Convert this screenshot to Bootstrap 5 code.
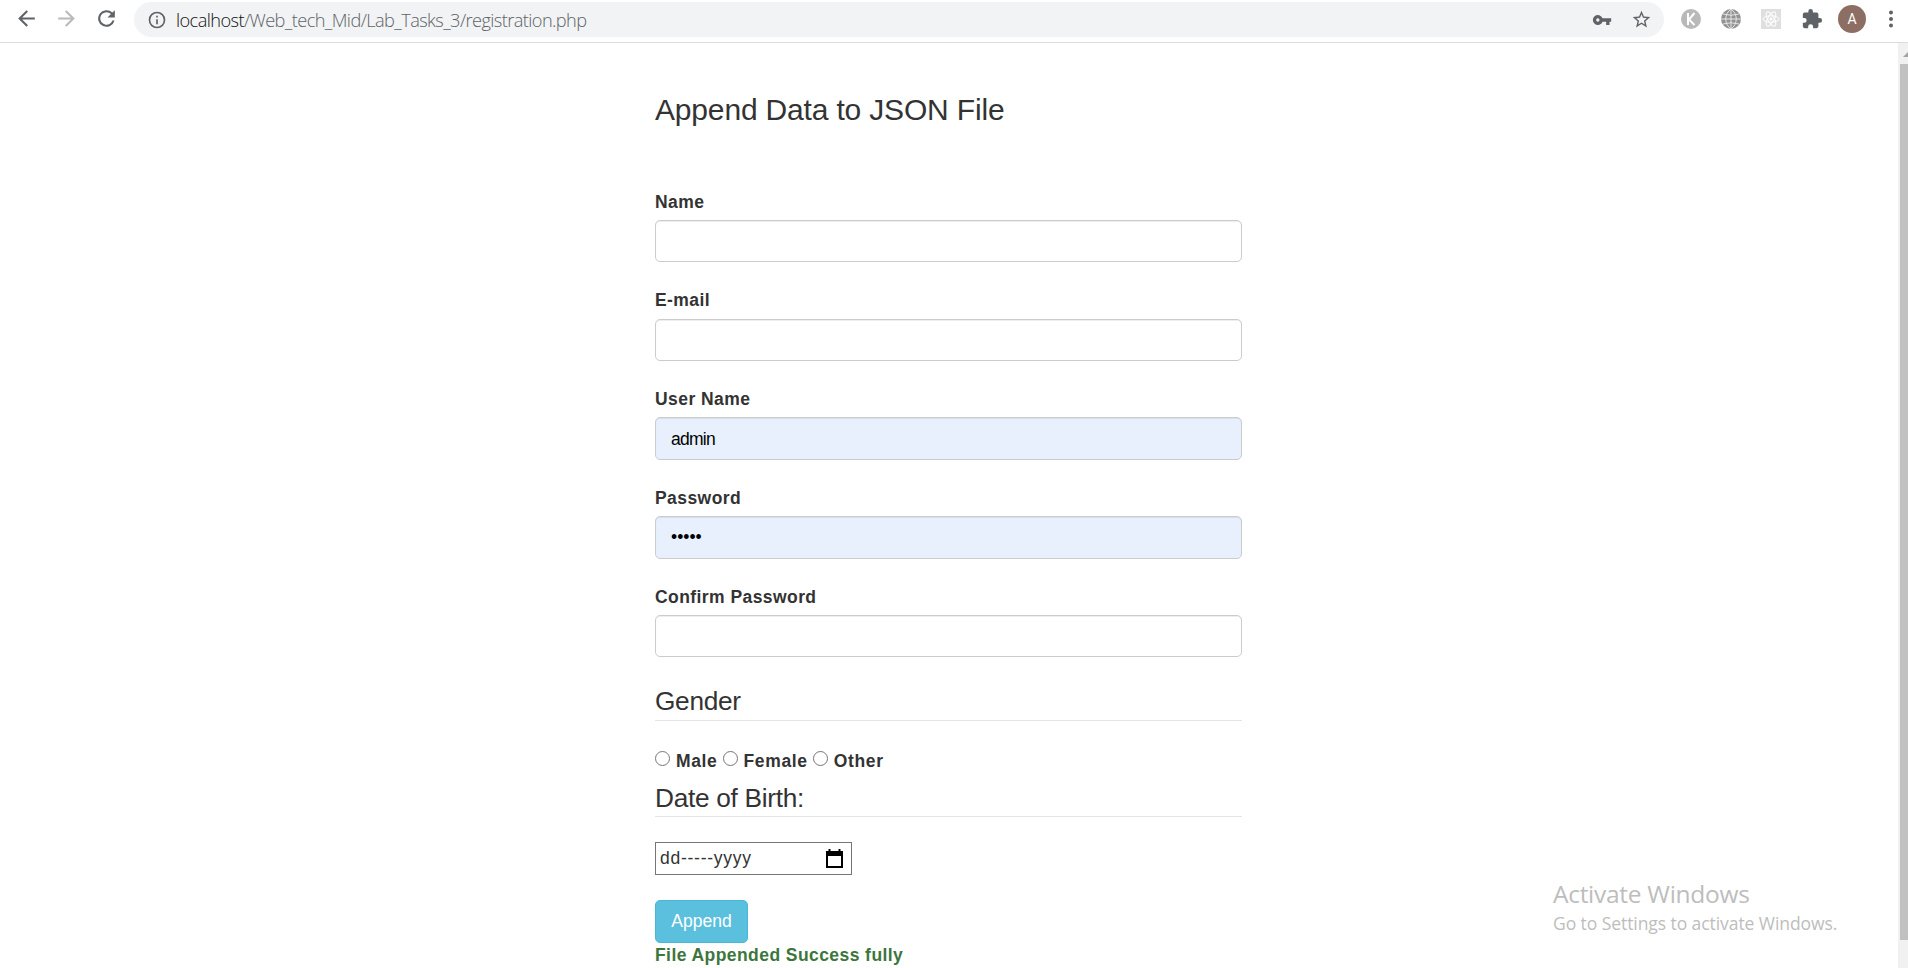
<!DOCTYPE html>
<html lang="en">
<head>
<meta charset="utf-8">
<title>Append Data to JSON File</title>
<link href="https://cdn.jsdelivr.net/npm/bootstrap@5.3.0/dist/css/bootstrap.min.css" rel="stylesheet">
<style>
html,body{height:968px;overflow:hidden}
body{font:17.5px/25px "Liberation Sans",Arial,sans-serif;color:#333;background:#fff}
.toolbar{height:43px;padding-bottom:5px;border-bottom:1px solid #dadce0;color:#5f6368}
.toolbar svg{display:block;fill:currentColor;flex:none}
.navs{width:134px;padding-left:14px;gap:15px}
.omni{width:1530px;height:35px;margin-top:2px;border-radius:18px;background:#f1f3f4;padding:0 12px 0 13px}
.url{font:300 18.2px/34px "Open Sans","Noto Sans",sans-serif;color:#5f6368;margin-left:9px;letter-spacing:-.58px;white-space:nowrap}
.url b{font-weight:300;color:#111}
.exts{width:244px;padding-left:17px}
.avatar{width:28px;height:28px;border-radius:50%;background:#8d6e63;color:#fff;font:14px/28px Roboto,sans-serif;text-align:center}
.view{height:925px}
.page{width:1898px;padding-left:655px}
.regform{width:587px}
h3{font-size:30px;line-height:33px;margin:50px 0 62.6px;letter-spacing:-.17px;font-weight:400}
.fgroup{margin-bottom:25px}
.fgroup label,.rad label,.ok{font-weight:700;line-height:25px;display:block;letter-spacing:.43px}
.fgroup label{line-height:27px;height:25px;margin-bottom:6.25px}
.fgroup .form-control{height:42.5px;padding:7.5px 15px;font-size:17.5px;line-height:25px;border:1px solid #ccc;border-radius:5px;box-shadow:inset 0 1px 1px rgba(0,0,0,.075);color:#555}
.fgroup .filled{background:#e8f0fe;color:#000}
.fgroup div.filled{letter-spacing:-.75px;line-height:27px}
legend{font-size:26.25px;line-height:39.5px;border-bottom:1px solid #e5e5e5;margin:0 0 25px;height:38.75px;float:none;letter-spacing:-.3px}
.rad{height:32.5px}
.rad input{appearance:none;width:15px;height:15px;border:1px solid #767676;border-radius:50%;margin:5px 6px 0 0;background:#fff;flex:none}
.rad label{margin-right:5px;padding-top:3px;letter-spacing:.65px}
.datebox{width:197px;height:33px;border:1px solid #767676;margin-bottom:25px;padding:0 8px 0 4px}
.datebox span{letter-spacing:.75px;line-height:27px}
.btn-append{height:42.5px;width:93px;padding:0;background:#5bc0de;border:1px solid #46b8da;color:#fff;font-size:17.5px;border-radius:5px;line-height:25px}
.ok{color:#3c763d}
.track{width:10px;background:#f1f1f1;padding:9px 0 0 2px}
.thumb{height:876px;background:#c1c1c1;margin-top:7px}
.watermark{left:1553px;top:876px;color:#bdbdbd;font-family:"Open Sans","Noto Sans",sans-serif;white-space:nowrap}
.wm1{font-size:24.5px;line-height:35px;letter-spacing:-.28px}
.wm2{font-size:17.5px;line-height:24px;letter-spacing:-.07px}
</style>
</head>
<body>
<header class="toolbar d-flex align-items-center">
  <div class="navs d-flex align-items-center">
    <svg width="25" height="25" viewBox="0 0 24 24"><path d="M20 11H7.83l5.59-5.59L12 4l-8 8 8 8 1.41-1.41L7.83 13H20z"/></svg>
    <svg width="25" height="25" viewBox="0 0 24 24" style="color:#bababa"><path d="M12 4l-1.41 1.41L16.17 11H4v2h12.17l-5.58 5.59L12 20l8-8z"/></svg>
    <svg width="25" height="25" viewBox="0 0 24 24"><path d="M17.65 6.35A8 8 0 1 0 19.73 14h-2.08A6 6 0 1 1 12 6c1.66 0 3.14.69 4.22 1.78L13 11h7V4z"/></svg>
  </div>
  <div class="omni d-flex align-items-center">
    <svg width="20" height="20" viewBox="0 0 24 24"><path d="M11 7h2v2h-2zm0 4h2v6h-2zm1-9a10 10 0 1 0 0 20 10 10 0 0 0 0-20zm0 18a8 8 0 1 1 0-16 8 8 0 0 1 0 16z"/></svg>
    <div class="url"><b>localhost</b>/Web_tech_Mid/Lab_Tasks_3/registration.php</div>
    <svg class="ms-auto" width="20" height="20" viewBox="0 0 24 24"><path d="M12.65 10A6 6 0 1 0 12.65 14H17v4h4v-4h2v-4zM7 14a2 2 0 1 1 0-4 2 2 0 0 1 0 4z"/></svg>
    <svg width="21" height="21" viewBox="0 0 24 24" style="margin-left:19px"><path d="M22 9.24l-7.19-.62L12 2 9.19 8.63 2 9.24l5.46 4.73L5.82 21 12 17.27 18.18 21l-1.63-7.03zM12 15.4l-3.76 2.27 1-4.28-3.32-2.88 4.38-.38L12 6.1l1.71 4.04 4.38.38-3.32 2.88 1 4.28z"/></svg>
  </div>
  <div class="exts d-flex align-items-center">
    <svg width="20" height="20" viewBox="0 0 20 20"><circle cx="10" cy="10" r="10" fill="#b9b9b9"/><path d="M7 4v12M13.5 4L8 10.5l5.500 5.500" fill="none" stroke="#fff" stroke-width="2"/></svg>
    <svg width="20" height="20" viewBox="0 0 20 20" style="margin-left:20px"><circle cx="10" cy="10" r="10" fill="#929292"/><path d="M10 0v20M0 10h20M2 5q8 2.500 16 0M2 15q8-2.500 16 0M10 0C3 5 3 15 10 20M10 0c7 5 7 15 0 20" fill="none" stroke="#e6e6e6"/></svg>
    <svg width="20" height="20" viewBox="0 0 20 20" style="margin-left:20px"><rect width="20" height="20" fill="#dfdfdf"/><g fill="none" stroke="#fff"><ellipse cx="10" cy="10" rx="8" ry="3.200"/><ellipse cx="10" cy="10" rx="8" ry="3.200" transform="rotate(60 10 10)"/><ellipse cx="10" cy="10" rx="8" ry="3.200" transform="rotate(120 10 10)"/></g><circle cx="10" cy="10" r="1.500" fill="#fff"/></svg>
    <svg width="22" height="22" viewBox="0 0 24 24" style="margin-left:20px"><path d="M20.500 11H19V7a2 2 0 0 0-2-2h-4V3.500a2.500 2.500 0 0 0-5 0V5H4a2 2 0 0 0-2 2v3.800h1.500a2.700 2.700 0 0 1 0 5.400H2V20a2 2 0 0 0 2 2h3.800v-1.500a2.700 2.700 0 0 1 5.400 0V22H17a2 2 0 0 0 2-2v-4h1.500a2.500 2.500 0 0 0 0-5z"/></svg>
    <div class="avatar" style="margin-left:15px">A</div>
    <svg width="6" height="20" viewBox="0 0 6 20" style="margin-left:22px"><circle cx="3" cy="3.500" r="2"/><circle cx="3" cy="10" r="2"/><circle cx="3" cy="16.500" r="2"/></svg>
  </div>
</header>
<div class="view d-flex">
  <main class="page">
    <form class="regform">
      <h3>Append Data to JSON File</h3>
      <div class="fgroup"><label>Name</label><input class="form-control" type="text"></div>
      <div class="fgroup"><label>E-mail</label><input class="form-control" type="text"></div>
      <div class="fgroup"><label>User Name</label><div class="form-control filled">admin</div></div>
      <div class="fgroup"><label>Password</label><input class="form-control filled" type="password" value="admin"></div>
      <div class="fgroup"><label>Confirm Password</label><input class="form-control" type="password"></div>
      <legend>Gender</legend>
      <div class="rad d-flex align-items-start">
        <input type="radio" name="g"><label>Male</label>
        <input type="radio" name="g"><label>Female</label>
        <input type="radio" name="g"><label>Other</label>
      </div>
      <legend>Date of Birth:</legend>
      <div class="datebox d-flex align-items-center justify-content-between"><span>dd-----yyyy</span>
        <svg width="17" height="19" viewBox="0 0 17 19"><path d="M0 2h2.500V0h2v2h8V0h2v2H17v17H0zm2 5v10h13V7z" fill="#000" fill-rule="evenodd"/></svg>
      </div>
      <button class="btn btn-append d-block" type="button">Append</button>
      <div class="ok">File Appended Success fully</div>
    </form>
  </main>
  <div class="track">
    <svg class="d-block ms-auto" width="5" height="5" viewBox="0 0 5 5"><path d="M0 5L5 0v5z" fill="#a3a3a3"/></svg>
    <div class="thumb"></div>
  </div>
</div>
<div class="watermark position-absolute"><div class="wm1">Activate Windows</div><div class="wm2">Go to Settings to activate Windows.</div></div>
</body>
</html>
